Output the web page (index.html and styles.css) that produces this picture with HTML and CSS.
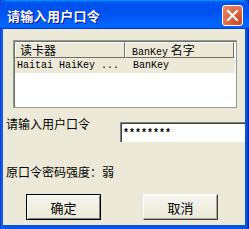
FILE: index.html
```html
<!DOCTYPE html>
<html>
<head>
<meta charset="utf-8">
<link rel="stylesheet" href="styles.css">
</head>
<body>
<div class="window">
  <div class="titlebar">
    <span class="title">请输入用户口令</span>
    <span class="close">
      <svg width="13" height="13" viewBox="0 0 13 13"><path d="M2 2 L11 11 M11 2 L2 11" stroke="#fff" stroke-width="2.2" stroke-linecap="square"/></svg>
    </span>
  </div>
  <div class="client">
    <div class="list">
      <div class="list-head">
        <div class="hcell c1">读卡器</div>
        <div class="hcell c2"><span class="mono">BanKey</span> 名字</div>
      </div>
      <div class="list-row">
        <div class="cell c1 mono">Haitai HaiKey ...</div>
        <div class="cell c2 mono">BanKey</div>
      </div>
    </div>
    <div class="pwd-row">
      <span class="label">请输入用户口令</span>
      <div class="input"><span class="stars">********</span></div>
    </div>
    <div class="strength">原口令密码强度：弱</div>
    <div class="buttons">
      <div class="btn default">确定</div>
      <div class="btn">取消</div>
    </div>
  </div>
</div>
</body>
</html>
```
FILE: styles.css
```css
html, body {
  margin: 0;
  padding: 0;
  background: #0054e3;
}
body {
  font-family: "Noto Sans CJK SC", "Liberation Sans", sans-serif;
  font-size: 12px;
  color: #000;
}
.window {
  width: 249px;
  height: 229px;
  display: flex;
  flex-direction: column;
  background: linear-gradient(90deg, #0831d9 0, #166aee 2px, #0055e5 3px, #0055e5 245px, #0d4fd6 247px, #001ea0 249px);
  overflow: hidden;
}
.titlebar {
  height: 29px;
  flex: 0 0 29px;
  display: flex;
  align-items: center;
  justify-content: space-between;
  padding: 0 6px 0 7px;
  box-sizing: border-box;
  background: linear-gradient(#0997ff, #0053ee 8%, #0050ee 40%, #0066ff 88%, #0066ff 93%, #005bff 95%, #003dd7 96%, #003dd7);
  border-radius: 7px 7px 0 0;
}
.title {
  color: #fff;
  font-weight: bold;
  font-size: 13px;
  letter-spacing: 0.3px;
  text-shadow: 1px 1px 0 #0f1089;
  margin-top: 1px;
}
.close {
  width: 19px;
  height: 19px;
  border: 1px solid #fff;
  border-radius: 3px;
  background: radial-gradient(circle at 80% 80%, #cc4622 0, #e0613d 40%, #e98a6a 100%);
  display: flex;
  align-items: center;
  justify-content: center;
  margin-top: 2px;
}
.client {
  flex: 1;
  margin: 0 4px 4px 3px;
  background: #ece9d8;
  display: flex;
  flex-direction: column;
}
.list {
  margin: 11px 0 0 10px;
  width: 224px;
  height: 68px;
  box-sizing: border-box;
  border: 1px solid #919b9c;
  box-shadow: inset 1px 1px 0 #716f64;
  background: #fff;
  padding: 1px 0 0 1px;
}
.list-head {
  display: flex;
  height: 16px;
}
.hcell {
  height: 16px;
  box-sizing: border-box;
  background: #ece9d8;
  border-top: 1px solid #fff;
  border-left: 1px solid #fff;
  border-right: 1px solid #716f64;
  border-bottom: 1px solid #716f64;
  line-height: 14px;
  padding-left: 4px;
  white-space: nowrap;
}
.hcell.c1 { width: 110px; }
.hcell.c2 { width: 109px; padding-left: 6px; }
.list-row {
  display: flex;
  height: 15px;
  background: #ece9d8;
  width: 220px;
}
.cell {
  line-height: 15px;
  white-space: nowrap;
  padding-left: 2px;
}
.cell.c1 { width: 108px; }
.cell.c2 { padding-left: 8px; }
.mono {
  font-family: "Liberation Mono", monospace;
  font-size: 10px;
}
.hcell .mono { font-size: 10px; }
.pwd-row {
  display: flex;
  justify-content: space-between;
  margin-top: 9px;
  height: 25px;
}
.label {
  line-height: 14px;
  padding-left: 3px;
}
.input {
  margin-top: 5px;
  width: 125px;
  height: 20px;
  box-sizing: border-box;
  background: #fff;
  border-top: 1px solid #808080;
  border-left: 1px solid #808080;
  box-shadow: inset 1px 1px 0 #404040;
  display: flex;
  align-items: center;
  padding-left: 2px;
}
.stars {
  font-family: "Liberation Mono", monospace;
  font-size: 10px;
  font-weight: bold;
  margin-top: 2px;
}
.strength {
  margin-top: 23px;
  line-height: 14px;
  padding-left: 3px;
}
.buttons {
  display: flex;
  margin-top: 15px;
  padding-left: 23px;
  gap: 42px;
}
.btn {
  width: 75px;
  height: 26px;
  box-sizing: border-box;
  display: flex;
  align-items: center;
  justify-content: center;
  background: linear-gradient(#f6f5ef, #ece9d8);
  border-top: 1px solid #fff;
  border-left: 1px solid #fff;
  border-right: 1px solid #404040;
  border-bottom: 1px solid #404040;
  box-shadow: inset -1px -1px 0 #aca899;
  font-size: 13px;
}
.btn.default {
  border: 1px solid #000;
  box-shadow: inset 1px 1px 0 #fff, inset -1px -1px 0 #808080;
}
```
